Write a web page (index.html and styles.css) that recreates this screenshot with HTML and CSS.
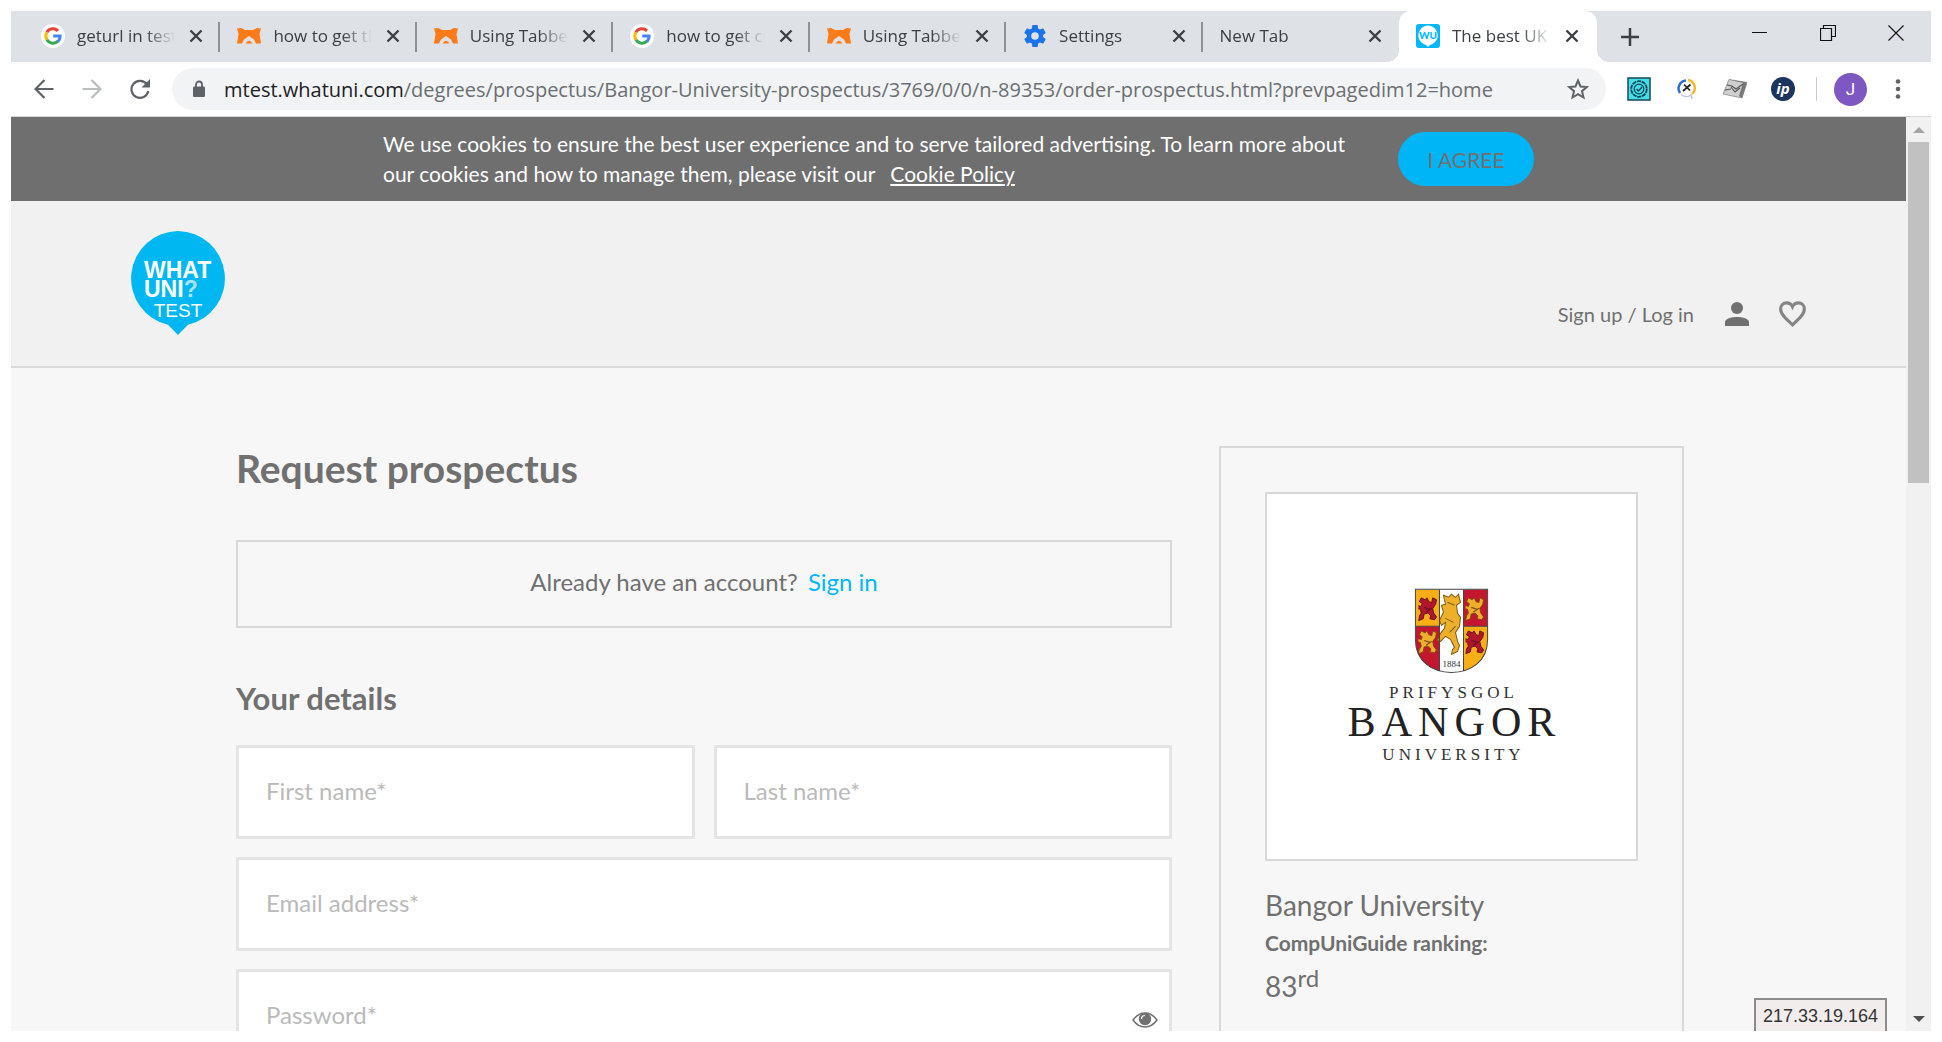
FILE: index.html
```html
<!DOCTYPE html>
<html lang="en">
<head>
<meta charset="utf-8">
<title>Request prospectus - Whatuni</title>
<link rel="stylesheet" href="styles.css">
</head>
<body>
<svg class="defs" aria-hidden="true">
  <symbol id="google" viewBox="0 0 24 24">
    <circle cx="12" cy="12" r="12" fill="#fff"/>
    <path d="M5.9 8.2A7.2 7.2 0 0 1 17 6.8" fill="none" stroke="#ea4335" stroke-width="3"/>
    <path d="M5.9 15.8A7.6 7.6 0 0 1 5.9 8.2" fill="none" stroke="#fbbc05" stroke-width="3"/>
    <path d="M5.9 15.8A7.2 7.2 0 0 0 17 17.2" fill="none" stroke="#34a853" stroke-width="3"/>
    <path d="M12.2 10.5h8.3c.5 3.200-.5 6-2.500 7.900l-2.300-1.900c.9-.7 1.500-1.700 1.700-2.900h-5.200z" fill="#4285f4"/>
  </symbol>
  <symbol id="bear" viewBox="0 0 24 16">
    <path d="M0 .5 4 0 8 2h8l4-2 4 .5-1.500 5.500L24 15.500h-5L17 11.500l-5-3.500-5 3.500-2 4H0L1.500 6z" fill="#ff7a18"/>
    <path d="M8.500 15.500q3.500-5.500 7 0z" fill="#ff7a18"/>
  </symbol>
  <symbol id="cross" viewBox="0 0 14 14">
    <path d="M1.500 1.500l11 11M12.500 1.500l-11 11" stroke="#3c4043" stroke-width="2.400"/>
  </symbol>
</svg>

<div class="window">
  <div class="tabbar">
    <div class="tabs">
      <div class="tab"><svg class="fav"><use href="#google"/></svg><span class="tab-title">geturl in testcafe</span><button class="tab-close" aria-label="Close tab"><svg><use href="#cross"/></svg></button></div>
      <div class="tab"><svg class="fav"><use href="#bear"/></svg><span class="tab-title">how to get the url</span><button class="tab-close" aria-label="Close tab"><svg><use href="#cross"/></svg></button></div>
      <div class="tab"><svg class="fav"><use href="#bear"/></svg><span class="tab-title">Using Tabbed pages</span><button class="tab-close" aria-label="Close tab"><svg><use href="#cross"/></svg></button></div>
      <div class="tab"><svg class="fav"><use href="#google"/></svg><span class="tab-title">how to get current</span><button class="tab-close" aria-label="Close tab"><svg><use href="#cross"/></svg></button></div>
      <div class="tab"><svg class="fav"><use href="#bear"/></svg><span class="tab-title">Using Tabbed pages</span><button class="tab-close" aria-label="Close tab"><svg><use href="#cross"/></svg></button></div>
      <div class="tab"><svg class="fav" viewBox="1 1 22 22"><path fill="#1a73e8" d="M19.430 12.980c.04-.32.07-.64.07-.98s-.03-.66-.07-.98l2.110-1.650c.19-.15.24-.42.12-.64l-2-3.460c-.12-.22-.39-.3-.61-.22l-2.490 1c-.52-.4-1.080-.73-1.690-.98l-.38-2.650C14.460 2.180 14.250 2 14 2h-4c-.25 0-.46.18-.49.42l-.38 2.650c-.61.25-1.170.59-1.690.98l-2.490-1c-.23-.09-.49 0-.61.22l-2 3.460c-.13.22-.07.49.12.64l2.110 1.650c-.04.32-.07.65-.07.98s.03.66.07.98l-2.110 1.650c-.19.15-.24.42-.12.64l2 3.460c.12.22.39.3.61.22l2.490-1c.52.4 1.080.73 1.690.98l.38 2.650c.03.24.24.42.49.42h4c.25 0 .46-.18.49-.42l.38-2.650c.61-.25 1.170-.59 1.690-.98l2.490 1c.23.09.49 0 .61-.22l2-3.460c.12-.22.07-.49-.12-.64l-2.110-1.650zM12 15.500a3.500 3.500 0 1 1 0-7 3.500 3.500 0 0 1 0 7z"/></svg><span class="tab-title">Settings</span><button class="tab-close" aria-label="Close tab"><svg><use href="#cross"/></svg></button></div>
      <div class="tab tab-last"><span class="tab-title">New Tab</span><button class="tab-close" aria-label="Close tab"><svg><use href="#cross"/></svg></button></div>
    </div>
    <div class="tab tab-active"><svg class="fav" viewBox="0 0 24 24"><rect width="24" height="24" rx="3" fill="#00b7ff"/><path d="M12 1.500a9.800 9.800 0 0 1 4 18.700l-2 .8-2 2-2-2-2-.8A9.800 9.800 0 0 1 12 1.500z" fill="#fff"/><text x="12" y="15" text-anchor="middle" class="wu">WU</text></svg><span class="tab-title">The best UK University</span><button class="tab-close" aria-label="Close tab"><svg><use href="#cross"/></svg></button></div>
    <button class="new-tab" aria-label="New tab"><svg viewBox="0 0 18 18"><path d="M9 0v18M0 9h18" stroke="#3c4043" stroke-width="2.500"/></svg></button>
    <div class="controls">
      <button aria-label="Minimize"><svg viewBox="0 0 16 16"><path d="M0 7.500h15" stroke="#111"/></svg></button>
      <button aria-label="Restore"><svg viewBox="0 0 16 16"><path d="M.5 3.500h11v12H.5zM3.500 3.500v-3h12v11h-4" fill="none" stroke="#111" stroke-width="1.200"/></svg></button>
      <button aria-label="Close window"><svg viewBox="0 0 16 16"><path d="M.5.5l15 15M15.500.5l-15 15" stroke="#111" stroke-width="1.100"/></svg></button>
    </div>
  </div>

  <div class="toolbar">
    <div class="nav">
      <button aria-label="Back"><svg viewBox="0 0 20 20"><path d="M19.500 10H2M10.500 1 1.500 10l9 9" fill="none" stroke="#5f6368" stroke-width="2.200"/></svg></button>
      <button aria-label="Forward"><svg viewBox="0 0 20 20"><path d="M.5 10H18M9.500 1l9 9-9 9" fill="none" stroke="#babcbe" stroke-width="2.200"/></svg></button>
      <button aria-label="Reload"><svg viewBox="0 0 20 20"><path d="M17 5.500A8.500 8.500 0 1 0 18.300 12" fill="none" stroke="#5f6368" stroke-width="2.200"/><path d="M20 0v8.500h-8.500z" fill="#5f6368"/></svg></button>
    </div>
    <div class="omnibox">
      <svg class="lock" viewBox="0 0 12 18"><path d="M3 8V4.500a3 3 0 0 1 6 0V8" fill="none" stroke="#5f6368" stroke-width="1.800"/><rect y="6.500" width="12" height="10.500" rx="1.200" fill="#5f6368"/></svg>
      <div class="url"><span class="host">mtest.whatuni.com</span>/degrees/prospectus/Bangor-University-prospectus/3769/0/0/n-89353/order-prospectus.html?prevpagedim12=home</div>
      <button class="star" aria-label="Bookmark this page"><svg viewBox="0 0 22 22"><path d="M11 2.500l2.500 6 6.400.500-4.900 4.200 1.500 6.300-5.500-3.400-5.500 3.400L7 13.200 2.100 9l6.400-.5z" fill="none" stroke="#5f6368" stroke-width="2"/></svg></button>
    </div>
    <div class="extensions">
      <svg viewBox="0 0 24 24"><rect x="1" y="1" width="22" height="22" fill="#43dfe6" stroke="#164a5b" stroke-width="1.500"/><circle cx="12" cy="12" r="7.800" fill="none" stroke="#12455a" stroke-width="1.800" stroke-dasharray="4.200 .7"/><circle cx="12" cy="12" r="4.800" fill="none" stroke="#12455a" stroke-width="1.300"/><path d="M9.500 12l2 2 3.500-4" fill="none" stroke="#12455a" stroke-width="1.500"/></svg>
      <svg viewBox="0 0 24 24"><path d="M11 3.500A8 8 0 0 0 5 16" fill="none" stroke="#2f6fd0" stroke-width="2.500"/><path d="M13 3a8 8 0 0 1 4 14" fill="none" stroke="#f5b82e" stroke-width="2.500"/><path d="M6 17.500a8 8 0 0 0 10 .5l1 4" fill="none" stroke="#b9c8de" stroke-width="1.500"/><path d="M9 7.500l6 6M15.500 7.500L8 14" stroke="#222" stroke-width="1.700"/></svg>
      <svg viewBox="0 0 24 24"><path d="M6 2.500 24 5.500 19 21 0 17z" fill="#cfcfcf" stroke="#8a8a8a" stroke-width=".8"/><path d="M6 2.500 24 5.500l-5 15.500-3-2L20 6z" fill="#777"/><path d="M4 8l5 1 4 3 7-5M2 13l6-1M8 10l4 5 5-4" fill="none" stroke="#555" stroke-width="1.200"/></svg>
      <svg viewBox="0 0 24 24"><circle cx="12" cy="12" r="12" fill="#1c355e"/><text x="12" y="17" text-anchor="middle" class="ip-logo">ip</text></svg>
    </div>
    <span class="divider"></span>
    <button class="avatar" aria-label="Profile">J</button>
    <button class="menu" aria-label="Menu"><svg viewBox="0 0 6 20"><circle cx="3" cy="2.500" r="2.300"/><circle cx="3" cy="10" r="2.300"/><circle cx="3" cy="17.500" r="2.300"/></svg></button>
  </div>

  <div class="viewport">
    <div class="page">
      <div class="cookie">
        <p>We use cookies to ensure the best user experience and to serve tailored advertising. To learn more about our cookies and how to manage them, please visit our <a href="#">Cookie Policy</a></p>
        <button class="agree">I AGREE</button>
      </div>

      <header class="header">
        <a href="#" class="logo" aria-label="Whatuni home">
          <svg viewBox="0 0 96 104"><path d="M48 0a47.500 47.500 0 0 1 10 93.800L48 104l-10-10.200A47.500 47.500 0 0 1 48 0z" fill="#00b7f1"/>
            <text x="14" y="47" class="logo-bold">WHAT</text><text x="14" y="66" class="logo-bold">UNI<tspan fill="#a5e6fb">?</tspan></text><text x="48" y="86" text-anchor="middle" class="logo-thin">TEST</text></svg>
        </a>
        <div class="account">
          <a href="#">Sign up / Log in</a>
          <svg class="user" viewBox="4 4 16 16"><circle cx="12" cy="8" r="4"/><path d="M12 14c-2.700 0-8 .8-8 3.500V20h16v-2.500c0-2.700-5.300-3.500-8-3.500z"/></svg>
          <svg class="heart" viewBox="1 2 22 21"><path d="M12 20.700C6.500 15.700 3 12.500 3 8.700 3 6 5 4 7.500 4c1.900 0 3.700 1.100 4.500 2.900C12.800 5.100 14.600 4 16.500 4 19 4 21 6 21 8.700c0 3.800-3.500 7-9 12z"/></svg>
        </div>
      </header>

      <main class="main">
        <section>
          <h1>Request prospectus</h1>
          <div class="signin">Already have an account? <a href="#">Sign in</a></div>
          <h2>Your details</h2>
          <form class="form">
            <div class="pair">
              <input type="text" placeholder="First name*" aria-label="First name">
              <input type="text" placeholder="Last name*" aria-label="Last name">
            </div>
            <input type="email" placeholder="Email address*" aria-label="Email address">
            <div class="password">
              <input type="password" placeholder="Password*" aria-label="Password">
              <button type="button" class="eye" aria-label="Show password"><svg viewBox="0 0 26 16"><path d="M1 8Q6 1 13 1t12 7q-5 7-12 7T1 8z" fill="none" stroke="#707070" stroke-width="1.500"/><circle cx="13" cy="7" r="6.200" fill="#707070"/><path d="M9.500 7A3.500 3.500 0 0 1 13 3.500" fill="none" stroke="#fff" stroke-width="1.200"/></svg></button>
            </div>
          </form>
        </section>
        <aside class="card">
          <div class="crest">
            <svg viewBox="0 0 368 364" role="img" aria-label="Prifysgol Bangor University">
              <defs>
                <clipPath id="shield"><path d="M148 95h72v50c0 22-17 33-36 33s-36-11-36-33z"/></clipPath>
                <symbol id="lion" viewBox="0 0 20 26"><path d="M3 2l4 2 2-2 2 4 3 1 1-5 4 2-1 5-3 4 1 5 3 4-2 3-5-1 1-3-3-3-4 1-1 5-5 2 1-5 2-3-1-4-4-1 1-3 4 1 1-3-3-2z" stroke-width="1"/><path d="M6 12l6 2M8 17l6-4" fill="none" stroke-width="1.200"/></symbol>
              </defs>
              <g clip-path="url(#shield)">
                <path d="M148 95h24v37h-24zM196 132h24v50h-24z" fill="#f9ae16"/>
                <path d="M196 95h24v37h-24zM148 132h24v50h-24z" fill="#c4172f"/>
                <path d="M172 95h24v85h-24z" fill="#fff"/>
                <use href="#lion" x="151" y="101" width="19" height="26" fill="#b5152c" stroke="#5d1420"/>
                <use href="#lion" x="198" y="101" width="19" height="26" fill="#eeb02a" stroke="#7d4a12"/>
                <use href="#lion" x="151" y="134" width="19" height="26" fill="#eeb02a" stroke="#7d4a12"/>
                <use href="#lion" x="198" y="134" width="19" height="26" fill="#b5152c" stroke="#5d1420"/>
                <path d="M176 101l5 2 3-3 4 3 3-3 2 8-4 3 1 8 3 4-1 9-4 6 2 9 2 4-2 6-6 3 1-5 2-2-4-8-5-3-5 5-3-1 3-7 4-5 1-6-4 3-2-5 4-8-2-7 4-1z" fill="#eeb02a" stroke="#7d5a12" stroke-width="1"/>
                <path d="M180 108l7 3M178 124l8 4M182 138l6-6" stroke="#7d5a12"/>
                <path d="M172 95v85M196 95v85M148 132h24M196 132h24" stroke="#444"/>
              </g>
              <text x="184" y="173" text-anchor="middle" class="year">1884</text>
              <path d="M148 95h72v50c0 22-17 33-36 33s-36-11-36-33z" fill="none" stroke="#444"/>
              <text x="186" y="203" text-anchor="middle" class="crest-small">PRIFYSGOL</text>
              <text x="187" y="241" text-anchor="middle" class="crest-big">BANGOR</text>
              <text x="186" y="265" text-anchor="middle" class="crest-small">UNIVERSITY</text>
            </svg>
          </div>
          <p class="uni">Bangor University</p>
          <p class="rank-label">CompUniGuide ranking:</p>
          <p class="rank">83<sup>rd</sup></p>
        </aside>
      </main>
    </div>
    <div class="scrollbar" aria-hidden="true">
      <svg class="arrow" viewBox="0 0 12 6"><path d="M0 6l6-6 6 6z" fill="#a3a3a3"/></svg>
      <div class="track"><div class="thumb"></div></div>
      <svg class="arrow" viewBox="0 0 12 6"><path d="M0 0h12L6 6z" fill="#505050"/></svg>
    </div>
    <div class="address">217.33.19.164</div>
  </div>
</div>
</body>
</html>
```
FILE: styles.css
```css
* { box-sizing: border-box; }
body {
  margin: 0;
  padding: 11px;
  height: 100vh;
  background: #fff;
  color: #707070;
  font-family: Lato, sans-serif;
}
p, h1, h2 { margin: 0; }
button { border: 0; padding: 0; background: none; font: inherit; color: inherit; }
a { color: inherit; text-decoration: none; }
svg { display: block; }
.defs { display: none; }

.window { display: flex; flex-direction: column; height: 100%; overflow: hidden; }

/* Tab strip */
.tabbar {
  display: flex;
  flex: none;
  height: 51px;
  padding-left: 13px;
  background: #dee1e6;
  color: #3c4043;
  font-family: "Open Sans", sans-serif;
  font-size: 17px;
}
.tabs { display: flex; flex: 0 1 1375px; min-width: 0; }
.tab { position: relative; display: flex; align-items: center; flex: 1 1 0; min-width: 0; padding: 0 17px 2px; }
.tabs .tab::after {
  content: "";
  position: absolute;
  right: 0;
  top: 11px;
  width: 2px;
  height: 30px;
  background: #8d9095;
}
.tabs .tab-last::after { display: none; }
.fav { flex: none; width: 24px; height: 24px; margin-right: 12px; }
.tab-title {
  flex: 1;
  overflow: hidden;
  white-space: nowrap;
  -webkit-mask-image: linear-gradient(to right, #000 70%, transparent 100%);
  mask-image: linear-gradient(to right, #000 70%, transparent 100%);
}
.tab-close { flex: none; margin-left: 14px; }
.tab-close svg { width: 14px; height: 14px; }
.tab-active { flex: 0 0 198px; padding-right: 18px; background: #fff; border-radius: 12px 12px 0 0; }
.tab-active::before, .tab-active::after {
  content: "";
  position: absolute;
  bottom: 0;
  width: 12px;
  height: 12px;
}
.tab-active::before { left: -12px; background: radial-gradient(circle at 0 0, transparent 12px, #fff 12px); }
.tab-active::after { right: -12px; background: radial-gradient(circle at 100% 0, transparent 12px, #fff 12px); }
.wu { font: 900 10px Lato, sans-serif; fill: #00b7ff; }
.new-tab { margin-left: 24px; }
.new-tab svg { width: 18px; height: 18px; }
.controls { display: flex; gap: 52px; margin-left: auto; padding: 14px 27px 0 0; align-items: flex-start; }
.controls svg { width: 16px; height: 16px; }

/* Address row */
.toolbar {
  display: flex;
  flex: none;
  align-items: center;
  height: 55px;
  padding: 0 30px 0 23px;
  border-bottom: 1px solid #d5d7da;
}
.nav { display: flex; gap: 28px; margin-right: 22px; }
.nav svg { width: 20px; height: 20px; }
.omnibox {
  display: flex;
  flex: 1;
  align-items: center;
  min-width: 0;
  height: 42px;
  padding: 0 17px 0 21px;
  border-radius: 21px;
  background: #f1f3f4;
}
.lock { flex: none; width: 12px; height: 18px; margin-right: 19px; }
.url { flex: 1; overflow: hidden; white-space: nowrap; font-family: "Open Sans", sans-serif; font-size: 20px; color: #6b6e72; }
.host { color: #202124; }
.star svg { width: 22px; height: 22px; }
.extensions { display: flex; gap: 24px; margin-left: 21px; }
.extensions svg { width: 24px; height: 24px; }
.ip-logo { font: italic 700 15px "Open Sans", sans-serif; fill: #fff; }
.divider { width: 1px; height: 24px; margin: 0 17px 0 21px; background: #c8cacd; }
.avatar { width: 33px; height: 33px; border-radius: 50%; background: #7e57c2; color: #fff; font-family: Roboto, sans-serif; font-size: 17px; }
.menu { margin-left: 28px; }
.menu svg { width: 6px; height: 20px; fill: #5f6368; }

/* Page area */
.viewport { position: relative; display: flex; flex: 1; min-height: 0; overflow: hidden; }
.page { flex: 1; min-width: 0; background: #f7f7f7; overflow: hidden; }
.scrollbar { display: flex; flex-direction: column; align-items: center; flex: none; width: 25px; padding: 10px 0 9px; background: #f1f1f1; }
.arrow { width: 12px; height: 6px; }
.track { flex: 1; width: 21px; padding-top: 9px; }
.thumb { height: 39%; background: #c1c1c1; }
.address {
  position: absolute;
  right: 44px;
  bottom: 0;
  height: 33px;
  padding: 0 7px;
  border: 2px solid #8c8c8c;
  border-bottom: 0;
  background: #f1eded;
  color: #333;
  font: 18px/32px "Liberation Sans", sans-serif;
}

.cookie { display: flex; justify-content: center; align-items: center; gap: 48px; height: 84px; background: #6f6f6f; }
.cookie p { width: 967px; font-size: 21px; line-height: 30px; color: #fff; }
.cookie a { margin-left: 10px; text-decoration: underline; }
.agree { width: 136px; height: 54px; border-radius: 27px; background: #00b5f5; color: #707070; font-size: 21px; }

.header {
  display: flex;
  justify-content: space-between;
  height: 167px;
  padding: 30px 99px 0 119px;
  background: #f1f1f1;
  border-bottom: 2px solid #dadada;
}
.logo svg { width: 96px; height: 104px; }
.logo-bold { font: 700 23px "Liberation Sans", sans-serif; fill: #fff; }
.logo-thin { font: 19px "Liberation Sans", sans-serif; fill: #fff; }
.account { display: flex; align-items: center; height: 106px; padding-top: 60px; font-size: 20px; }
.user { width: 24px; height: 24px; margin: 0 29px 0 31px; fill: #707070; }
.heart { width: 29px; height: 28px; fill: none; stroke: #858585; stroke-width: 2.4; }

.main { display: grid; grid-template-columns: 936fr 465fr; gap: 47px; padding: 78px 222px 0 225px; }
.main section { min-width: 0; }
h1 { font-size: 39px; line-height: 44px; }
.signin {
  height: 88px;
  margin-top: 50px;
  border: 2px solid #d8d8d8;
  font-size: 24px;
  line-height: 80px;
  text-align: center;
}
.signin a { margin-left: 4px; color: #00b7ff; }
h2 { margin: 50px 0 27px; font-size: 31px; line-height: 40px; }
.form { display: flex; flex-direction: column; gap: 18px; }
.pair { display: grid; grid-template-columns: 1fr 1fr; gap: 19px; }
.form input {
  display: block;
  width: 100%;
  height: 94px;
  padding: 0 27px 4px;
  border: 3px solid #e4e4e4;
  border-radius: 0;
  background: #fff;
  font: 24px Lato, sans-serif;
}
.form input::placeholder { color: #bababa; opacity: 1; }
.password { position: relative; }
.eye { position: absolute; right: 14px; top: 43px; }
.eye svg { width: 26px; height: 16px; }

.card { min-width: 0; height: 700px; padding: 44px; border: 2px solid #d8d8d8; }
.crest { border: 2px solid #d8d8d8; background: #fff; }
.crest svg { width: 100%; }
.crest-small { font: 17px "Liberation Serif", serif; letter-spacing: 4px; fill: #333; }
.crest-big { font: 42px "Liberation Serif", serif; letter-spacing: 6px; fill: #222; }
.year { font: 9px "Liberation Serif", serif; fill: #333; }
.uni { margin-top: 24px; font-size: 28px; line-height: 40px; }
.rank-label { font-size: 21px; line-height: 36px; font-weight: 700; }
.rank { font-size: 28px; line-height: 50px; }
.rank sup { font-size: 24px; line-height: 0; }
```
